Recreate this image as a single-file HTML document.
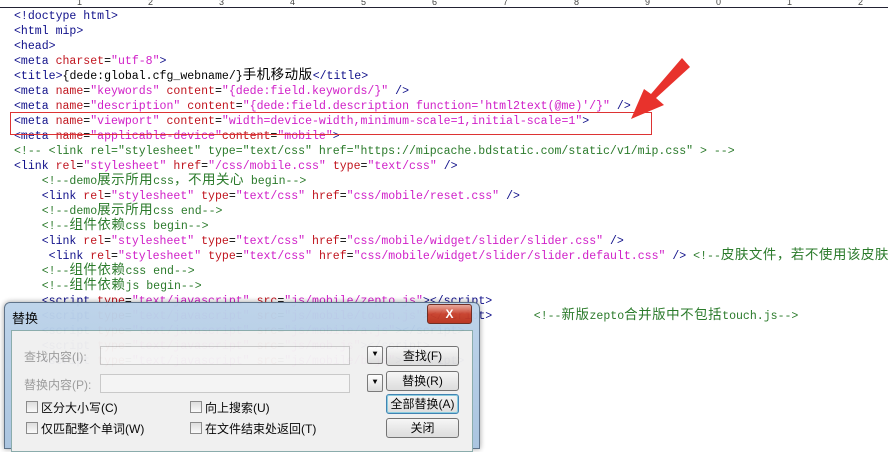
<!DOCTYPE html>
<html><head><meta charset="utf-8"><style>
body{margin:0;width:888px;height:439px;overflow:hidden;background:#fff;position:relative;font-family:"Liberation Mono","Noto Sans CJK SC",monospace;}
.ruler{position:absolute;left:0;top:0;width:888px;height:7px;border-bottom:1px solid #223;font:9px "Liberation Sans",sans-serif;color:#444;}
.ruler span{position:absolute;top:-3px}
.code{position:absolute;left:14px;top:9px;font-size:11.55px;line-height:15px;white-space:pre;color:#000;}
.k{font-size:13.5px;letter-spacing:0.5px}
.t{color:#10108a}.a{color:#c0141e}.v{color:#d020c8}.c{color:#2a7a2a}
.box{position:absolute;left:10px;top:112px;width:640px;height:21px;border:1px solid #d33;}
.dlg{position:absolute;left:4px;top:302px;width:474px;height:145px;background:linear-gradient(#bcd3ea,#a9c4e0);border:1px solid #5a6f86;border-radius:6px 6px 0 0;box-shadow:0 0 6px rgba(0,0,0,.4);opacity:.97}
.dlg .ttl{position:absolute;left:7px;top:5px;font:13px "Liberation Sans","Noto Sans CJK SC",sans-serif;color:#000}
.x{position:absolute;left:422px;top:1px;width:43px;height:18px;border-radius:3px;background:linear-gradient(#e8a79a,#c9412c 50%,#b8321f);border:1px solid #6b2a20;color:#fff;font:bold 12px "Liberation Sans",sans-serif;text-align:center;line-height:18px}
.in{position:absolute;left:6px;top:27px;width:460px;height:120px;background:#f0f0f0;border:1px solid #8aa;}
.ui{font:12px "Liberation Sans","Noto Sans CJK SC",sans-serif;position:absolute;color:#000}
.g{color:#9a9a9a}
.cb{position:absolute;width:10px;height:10px;border:1px solid #888;background:linear-gradient(#ddd,#fafafa)}
.fld{position:absolute;width:248px;height:17px;border:1px solid #c8c8c8;background:#f4f4f4}
.dd{position:absolute;width:14px;height:16px;border:1px solid #777;border-radius:2px;background:linear-gradient(#fff,#ddd);font-size:8px;text-align:center;line-height:16px}
.btn{position:absolute;width:71px;height:18px;border:1px solid #707070;border-radius:3px;background:linear-gradient(#f6f6f6,#dcdcdc);text-align:center;line-height:18px;font:12px "Liberation Sans","Noto Sans CJK SC",sans-serif}
</style></head><body>
<div class="ruler"><span style="left:77px">1</span><span style="left:148px">2</span><span style="left:219px">3</span><span style="left:290px">4</span><span style="left:361px">5</span><span style="left:432px">6</span><span style="left:503px">7</span><span style="left:574px">8</span><span style="left:645px">9</span><span style="left:716px">0</span><span style="left:787px">1</span><span style="left:858px">2</span></div>
<div class="code"><span class="t">&lt;!doctype html&gt;</span>
<span class="t">&lt;html mip&gt;</span>
<span class="t">&lt;head&gt;</span>
<span class="t">&lt;meta </span><span class="a">charset</span>=<span class="v">"utf-8"</span><span class="t">&gt;</span>
<span class="t">&lt;title&gt;</span>{dede:global.cfg_webname/}<span class="k">手机移动版</span><span class="t">&lt;/title&gt;</span>
<span class="t">&lt;meta </span><span class="a">name</span>=<span class="v">"keywords"</span> <span class="a">content</span>=<span class="v">"{dede:field.keywords/}"</span> <span class="t">/&gt;</span>
<span class="t">&lt;meta </span><span class="a">name</span>=<span class="v">"description"</span> <span class="a">content</span>=<span class="v">"{dede:field.description function='html2text(@me)'/}"</span> <span class="t">/&gt;</span>
<span class="t">&lt;meta </span><span class="a">name</span>=<span class="v">"viewport"</span> <span class="a">content</span>=<span class="v">"width=device-width,minimum-scale=1,initial-scale=1"</span><span class="t">&gt;</span>
<span class="t">&lt;meta </span><span class="a">name</span>=<span class="v">"applicable-device"</span><span class="a">content</span>=<span class="v">"mobile"</span><span class="t">&gt;</span>
<span class="c">&lt;!-- &lt;link rel="stylesheet" type="text/css" href="https://mipcache.bdstatic.com/static/v1/mip.css" &gt; --&gt;</span>
<span class="t">&lt;link </span><span class="a">rel</span>=<span class="v">"stylesheet"</span> <span class="a">href</span>=<span class="v">"/css/mobile.css"</span> <span class="a">type</span>=<span class="v">"text/css"</span> <span class="t">/&gt;</span>
    <span class="c">&lt;!--demo<span class="k">展示所用</span>css<span class="k">，不用关心</span> begin--&gt;</span>
    <span class="t">&lt;link </span><span class="a">rel</span>=<span class="v">"stylesheet"</span> <span class="a">type</span>=<span class="v">"text/css"</span> <span class="a">href</span>=<span class="v">"css/mobile/reset.css"</span> <span class="t">/&gt;</span>
    <span class="c">&lt;!--demo<span class="k">展示所用</span>css end--&gt;</span>
    <span class="c">&lt;!--<span class="k">组件依赖</span>css begin--&gt;</span>
    <span class="t">&lt;link </span><span class="a">rel</span>=<span class="v">"stylesheet"</span> <span class="a">type</span>=<span class="v">"text/css"</span> <span class="a">href</span>=<span class="v">"css/mobile/widget/slider/slider.css"</span> <span class="t">/&gt;</span>
     <span class="t">&lt;link </span><span class="a">rel</span>=<span class="v">"stylesheet"</span> <span class="a">type</span>=<span class="v">"text/css"</span> <span class="a">href</span>=<span class="v">"css/mobile/widget/slider/slider.default.css"</span> <span class="t">/&gt;</span> <span class="c">&lt;!--<span class="k">皮肤文件，若不使用该皮肤</span></span>
    <span class="c">&lt;!--<span class="k">组件依赖</span>css end--&gt;</span>
    <span class="c">&lt;!--<span class="k">组件依赖</span>js begin--&gt;</span>
    <span class="t">&lt;script </span><span class="a">type</span>=<span class="v">"text/javascript"</span> <span class="a">src</span>=<span class="v">"js/mobile/zepto.js"</span><span class="t">&gt;&lt;/script&gt;</span>
    <span class="t">&lt;script </span><span class="a">type</span>=<span class="v">"text/javascript"</span> <span class="a">src</span>=<span class="v">"js/mobile/touch.js"</span><span class="t">&gt;&lt;/script&gt;</span>      <span class="c">&lt;!--<span class="k">新版</span>zepto<span class="k">合并版中不包括</span>touch.js--&gt;</span>
    <span class="t">&lt;script </span><span class="a">type</span>=<span class="v">"text/javascript"</span> <span class="a">src</span>=<span class="v">"js/mobile/a.js"</span><span class="t">&gt;&lt;/script&gt;</span>
    <span class="t">&lt;script </span><span class="a">type</span>=<span class="v">"text/javascript"</span> <span class="a">src</span>=<span class="v">"js/mob.js"</span><span class="t">&gt;&lt;/script&gt;</span>
    <span class="t">&lt;script </span><span class="a">type</span>=<span class="v">"text/javascript"</span> <span class="a">src</span>=<span class="v">"js/mobile/b.js"</span><span class="t">&gt;&lt;/script&gt;</span></div>
<div class="box"></div>
<svg style="position:absolute;left:0;top:0" width="888" height="439"><polygon points="682,58 690,67 656,98 664,105 631,119 644,89 651,94" fill="#e8322c"/></svg>
<div class="dlg">
<div class="ttl">替换</div><div class="x">X</div>
<div class="in">
<div class="ui g" style="left:12px;top:17px">查找内容(I):</div><div class="fld" style="left:88px;top:15px"></div><div class="dd" style="left:355px;top:15px">▼</div>
<div class="ui g" style="left:12px;top:45px">替换内容(P):</div><div class="fld" style="left:88px;top:43px"></div><div class="dd" style="left:355px;top:43px">▼</div>
<div class="cb" style="left:14px;top:70px"></div><div class="ui" style="left:29px;top:68px">区分大小写(C)</div>
<div class="cb" style="left:178px;top:70px"></div><div class="ui" style="left:193px;top:68px">向上搜索(U)</div>
<div class="cb" style="left:14px;top:91px"></div><div class="ui" style="left:29px;top:89px">仅匹配整个单词(W)</div>
<div class="cb" style="left:178px;top:91px"></div><div class="ui" style="left:193px;top:89px">在文件结束处返回(T)</div>
<div class="btn" style="left:374px;top:15px">查找(F)</div>
<div class="btn" style="left:374px;top:40px">替换(R)</div>
<div class="btn" style="left:374px;top:63px;border-color:#3c7fb1;box-shadow:inset 0 0 0 1px #8cd">全部替换(A)</div>
<div class="btn" style="left:374px;top:87px">关闭</div>
</div></div>
</body></html>
